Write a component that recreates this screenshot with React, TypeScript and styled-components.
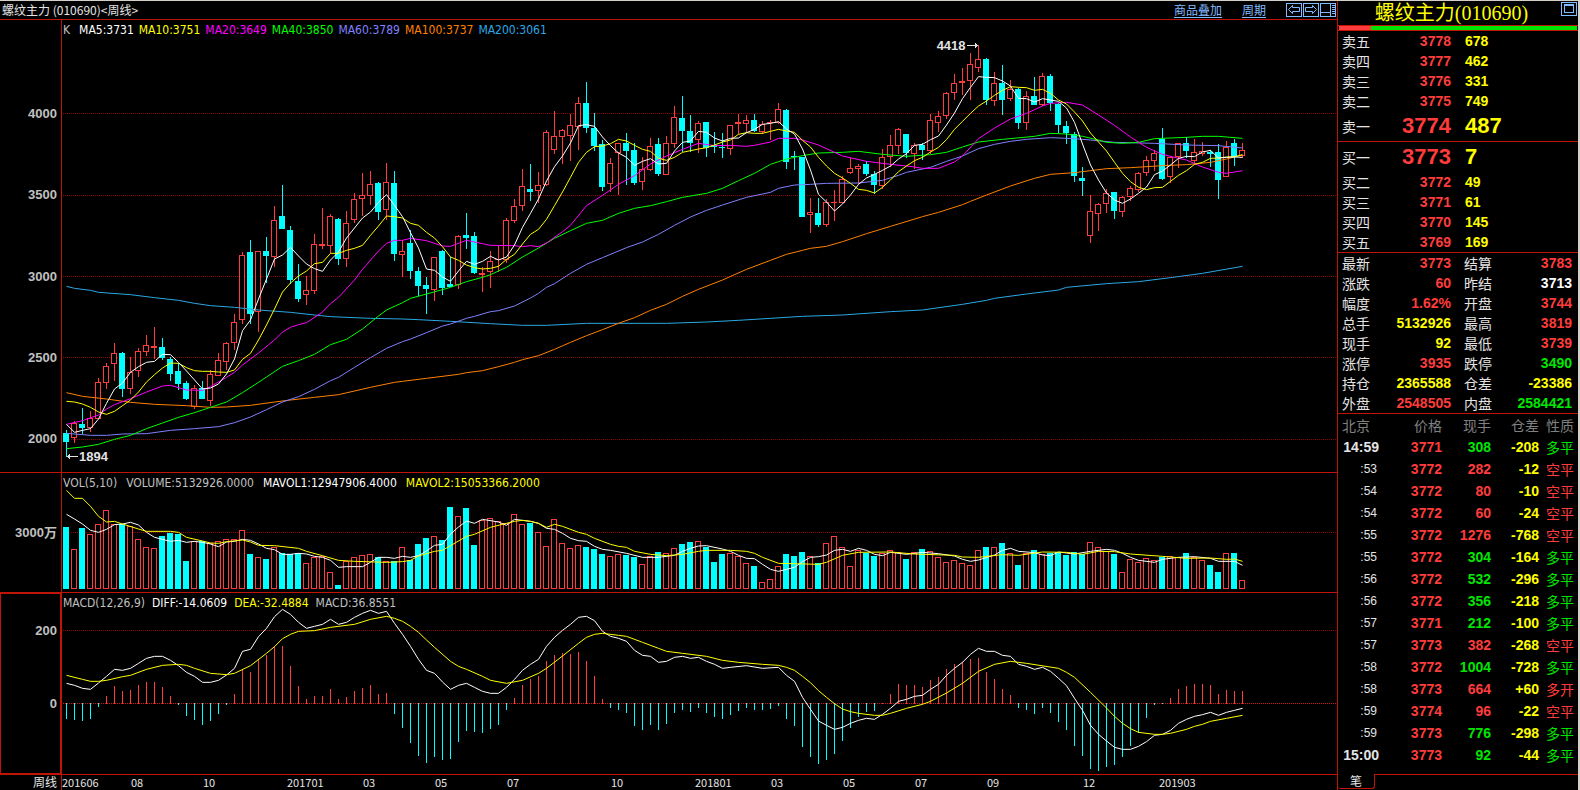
import React from "react";
import styled, { createGlobalStyle } from "styled-components";

const color = {
  bg: "#000000",
  line: "#c01408",
  grid: "#8c0000",
  up: "#ff3c3c",
  down: "#00ffff",
  green: "#00e600",
  yellow: "#ffff00",
  white: "#ffffff",
  label: "#e4e4e4",
  muted: "#c0c0c0",
  dim: "#808080",
  link: "#80bcff",
  frame: "#d4d0c8",
};

const cjk = '"Noto Sans CJK SC", sans-serif';
const legendFont = '"DejaVu Sans Condensed", "DejaVu Sans", sans-serif';
const numberFont = '"Liberation Sans", "Noto Sans CJK SC", sans-serif';

const GlobalStyle = createGlobalStyle`
  *, *::before, *::after { box-sizing: border-box; }
  body { margin: 0; background: ${color.bg}; }
`;

/* ---------- data: pixel values are stored in thirds of a pixel ---------- */

type Point = [number, number];
type Candle = [string, number, number, number, number];

// direction, high, body top, body bottom, low
const candles: Candle[] = `
c 1290 1299 1326 1370|r 1262 1269 1313 1328|c 1224 1272 1284 1302|r 1233 1254 1284 1296|r 1134 1146 1257 1257
r 1090 1099 1149 1166|r 1029 1059 1092 1143|c 1056 1059 1167 1190|r 1071 1116 1167 1182|r 1044 1053 1113 1131
r 1005 1035 1056 1068|r 981 1038 1044 1077|c 1014 1041 1074 1080|c 1071 1077 1122 1143|c 1090 1113 1152 1170
c 1143 1149 1197 1200|r 1155 1164 1221 1227|c 1143 1164 1197 1197|r 1110 1122 1203 1218|r 1059 1080 1128 1128
r 1026 1029 1086 1110|r 942 966 1029 1050|r 756 765 960 972|c 720 756 942 972|r 753 753 936 996
c 711 753 768 850|r 618 660 771 801|c 555 648 687 687|c 678 690 840 852|c 792 843 897 906
r 828 870 885 915|r 702 732 873 882|r 624 732 738 747|r 642 648 738 760|c 654 657 777 795
r 633 669 777 801|r 579 597 660 669|r 519 585 597 648|r 513 552 588 615|c 546 549 636 660
r 489 546 630 660|c 513 549 762 783|r 720 753 765 831|c 690 729 813 837|c 801 813 858 888
c 831 855 867 942|r 771 771 870 903|c 750 753 864 885|c 771 852 861 861|r 705 708 855 867
c 639 705 714 747|c 696 708 819 822|r 801 819 825 876|r 753 783 816 864|r 738 777 781 816
r 654 660 780 789|r 597 618 663 669|r 507 558 618 633|c 492 567 576 603|r 516 555 573 609
r 390 396 555 558|r 333 408 450 462|r 387 390 411 492|r 342 375 408 483|r 291 309 381 450
c 246 309 384 399|c 339 384 438 453|c 420 432 561 573|r 474 489 552 576|r 429 429 459 585
c 399 429 453 555|c 429 450 549 555|r 471 507 546 570|r 414 438 510 513|c 414 432 522 528
r 408 429 525 525|r 318 351 432 444|c 288 354 393 456|c 345 393 429 456|r 363 369 420 459
c 366 366 444 471|c 396 436 440 459|c 399 440 444 474|r 375 375 447 465|r 342 366 371 402
r 345 360 372 399|c 342 360 393 396|r 363 372 396 402|r 360 366 370 420|r 309 327 369 372
c 327 330 486 507|c 453 467 472 510|c 471 471 651 651|r 594 636 645 699|c 594 639 675 681
r 597 606 675 681|r 570 606 610 663|r 528 537 609 609|r 474 504 519 522|r 492 498 506 552
c 483 492 522 528|c 513 522 555 582|r 447 471 558 567|r 405 435 471 501|r 384 387 438 462
c 402 402 459 474|r 429 435 462 507|c 429 435 450 480|r 342 360 453 462|r 333 348 369 396
r 276 279 348 357|r 222 249 279 300|r 204 243 248 285|r 159 192 243 300|r 135 177 204 216
c 174 177 300 315|r 216 249 303 318|c 195 249 300 345|r 240 267 297 303|c 264 267 369 387
r 273 288 369 390|c 231 288 315 315|r 219 228 315 318|c 222 228 309 333|c 309 312 375 399
c 363 378 399 432|c 396 402 528 546|c 501 534 543 588|r 585 633 708 729|r 609 612 642 693
r 567 579 612 639|c 576 576 633 657|r 588 591 636 651|r 558 564 591 603|r 516 519 570 576
r 468 480 519 528|r 450 459 483 513|c 384 417 537 540|r 468 471 531 549|r 429 429 471 504
c 411 429 453 474|r 417 456 483 495|r 426 453 462 468|c 450 456 462 501|c 432 456 540 597
r 423 441 531 531|c 417 429 471 498|r 429 450 468 474`
  .trim()
  .split(/[|\n]/)
  .map((s) => {
    const [d, ...v] = s.trim().split(" ");
    return [d, ...v.map(Number)] as Candle;
  });

const nums = (s: string) => s.trim().split(/\s+/).map(Number);
const dense = (s: string): Point[] => nums(s).map((y, i) => [i, y]);
const sparse = (s: string): Point[] =>
  s.trim().split(/\s+/).map((p) => p.split(":").map(Number) as Point);

const ma5 = dense(`1273 1297 1291 1286 1257 1210 1167 1149 1117 1100 1087 1084 1063 1064 1087 1113 1140 1167 1164 1152
1122 1077 992 960 897 837 777 765 742 768 792 806 814 780 756 714 684 654 636 607 584 616 650 698 744 807 811 831 844 813
784 793 784 769 780 771 735 682 640 597 543 500 468 429 377 374 379 411 437 459 472 496 484 476 492 490 453 427 423 394
397 414 423 415 414 398 388 373 370 365 387 402 447 510 583 606 633 612 585 553 534 523 511 498 477 461 436 433 419 408
375 339 296 262 230 232 233 243 258 295 296 306 296 300 304 324 367 432 495 540 579 600 610 597 580 561 524 513 495 475
469 470 456 451 474 472 471 472`);

const ma10 = dense(`1204 1206 1212 1222 1236 1243 1234 1217 1200 1176 1146 1124 1104 1089 1090 1103 1112 1114 1114 1116
1117 1110 1078 1060 1020 975 927 876 849 828 813 791 787 760 760 751 745 736 706 678 648 650 654 670 676 697 714 740 771 781
795 803 807 805 799 778 763 732 703 688 658 617 576 532 487 457 440 438 431 418 423 436 448 454 475 481 472 457 452 447
443 435 426 420 403 398 400 400 394 388 393 397 421 441 472 498 520 534 550 568 571 579 562 540 515 498 482 472 456 442
419 388 364 340 318 303 286 271 260 262 263 271 268 280 300 312 336 363 399 426 453 487 520 545 562 569 563 562 544 526
512 493 487 475 474 471 470 464`);

const ma20 = sparse(`0:1273 2:1262 4:1245 5:1227 6:1214 8:1196 10:1176 12:1158 13:1156 15:1170 17:1171 18:1160 20:1132
21:1117 22:1095 24:1059 26:1020 27:996 28:982 29:974 30:968 32:936 33:911 34:892 36:840 37:808 39:753 40:730 41:721 42:721
43:715 45:722 47:738 48:739 50:721 52:731 53:736 56:737 57:740 58:737 59:740 60:729 62:695 63:676 65:617 67:586 69:553
71:527 73:492 75:468 77:448 79:430 81:437 83:436 85:439 86:436 88:426 89:415 91:415 92:420 94:435 97:468 100:484 103:493
105:498 106:501 107:505 109:505 111:486 112:468 114:416 116:384 118:357 120:340 122:318 123:310 125:307 127:315 129:345
131:376 133:411 135:442 137:463 139:475 140:480 142:501 144:517 145:520 147:512`);

const ma40 = sparse(`0:1346 2:1341 4:1333 6:1318 8:1306 10:1286 12:1269 14:1252 16:1238 18:1222 20:1206 22:1178 24:1147
25:1131 27:1099 29:1082 31:1063 33:1034 35:1018 37:987 39:948 40:930 42:908 43:895 45:882 47:869 48:862 50:845 52:832
53:824 55:802 57:771 59:744 61:715 63:692 65:670 67:661 69:640 71:625 73:617 75:605 77:592 80:580 82:565 84:542 86:520
88:493 90:477 92:467 94:459 97:457 99:454 102:463 105:469 108:464 110:457 112:441 114:426 117:418 121:409 123:400 125:402
127:409 129:420 130:427 132:430 134:427 136:416 140:412 142:409 144:409 147:415`);

const ma60 = sparse(`0:1300 3:1306 5:1306 7:1302 10:1301 13:1291 16:1286 19:1280 21:1268 23:1251 25:1229 27:1206 29:1190
31:1168 33:1142 34:1132 36:1102 38:1073 40:1045 42:1025 43:1017 45:998 47:978 48:972 50:955 51:949 53:935 54:932 56:918
58:894 59:880 60:862 61:851 63:820 65:793 67:773 70:743 72:726 74:703 76:676 78:651 80:631 82:615 85:592 88:577 89:565
91:555 93:553 95:550 99:549 102:541 104:526 105:517 108:502 110:484 112:468 114:446 116:433 118:424 120:418 123:413
126:416 128:420 131:427 136:430 140:435 144:437 147:444`);

const ma100 = sparse(`0:1178 2:1189 5:1197 8:1207 11:1213 15:1217 18:1222 20:1221 23:1216 26:1206 28:1200 31:1192 34:1184
38:1162 41:1147 42:1144 45:1135 49:1123 50:1118 52:1112 54:1100 56:1087 57:1079 59:1067 61:1048 63:1027 65:1007 67:989
69:970 71:953 73:931 75:913 77:889 79:868 82:840 85:808 88:781 90:763 92:751 93:745 95:739 97:725 100:701 103:679 107:650
109:637 112:614 113:604 115:585 118:558 121:535 123:523 126:518 130:506 133:503 137:497 140:494 143:487 145:477 147:465`);

const ma200 = sparse(`0:859 1:865 3:871 4:877 8:884 11:893 14:901 16:910 18:917 21:922 24:930 28:937 31:945 33:950 38:955
42:957 44:959 48:964 53:971 57:976 60:976 65:970 75:970 80:966 84:961 88:955 92:949 97:945 103:935 107:930 112:913 115:901
116:895 120:882 124:870 125:862 130:851 134:845 138:833 142:820 147:799`);

const volumes = nums(`171 238 174 192 162 121 162 162 168 207 231 234 198 189 192 273 213 213 219 213 207 207 180 252 261
267 231 249 252 249 279 261 258 306 345 273 261 255 252 261 273 273 231 270 222 204 198 210 111 138 114 225 150 144 153
159 132 162 159 186 228 147 219 234 225 231 237 252 258 252 255 261 282 258 246 249 234 222 216 213 231 276 252 249 258
279 288 336 327 288 252 258 246 258 279 219 198 231 288 240 249 258 249 240 246 267 246 237 243 261 276 270 279 285 240
231 231 219 249 285 249 240 252 249 246 255 246 252 216 231 243 252 306 267 276 264 270 261 258 261 249 261 270 285 306
249 249 330`);

const mavol1 = sparse(`0:133 1:147 2:162 3:181 4:187 5:178 6:164 7:162 8:157 9:165 10:187 11:202 12:208 13:214 14:211
15:217 16:214 17:217 18:222 19:230 20:216 21:214 22:208 23:211 24:222 25:235 26:239 27:253 28:253 29:250 30:252 31:259
32:262 33:271 34:292 35:290 37:290 38:277 39:262 40:262 41:265 42:259 43:262 44:257 45:243 46:226 47:223 48:192 49:171
50:153 51:160 52:148 54:156 55:166 56:148 58:154 59:160 60:175 61:178 62:190 63:205 64:212 65:214 66:229 67:238 68:241
70:250 72:262 74:262 76:256 77:244 78:235 79:228 80:227 82:237 83:244 84:256 85:265 86:266 87:283 88:298 89:304 90:298
91:292 92:275 93:262 94:260 95:255 96:241 97:238 98:244 99:235 100:241 101:253 102:257 103:247 105:253 107:247 109:251
111:258 112:268 113:274 114:270 116:255 117:241 118:235 119:244 121:248 122:255 123:257 124:246 126:252 128:244 130:238
131:241 132:250 133:262 134:271 136:277 137:268 139:262 141:260 143:265 144:274 146:274 147:286`);

const mavol2 = sparse(`0:61 1:85 2:85 3:109 4:139 5:156 6:154 7:162 9:177 10:184 13:184 14:187 15:202 17:213 18:219 19:220
20:215 22:210 23:216 24:226 26:227 29:235 30:244 32:257 34:271 36:274 40:277 42:275 43:271 44:258 46:244 47:241 48:227
50:199 51:193 53:172 55:160 56:154 57:151 58:154 59:160 60:172 61:163 62:169 64:187 65:193 66:205 68:223 69:229 70:232
71:244 73:253 75:257 77:253 79:244 80:241 83:241 85:244 86:250 87:262 89:280 94:283 95:277 97:256 99:247 103:246 106:252
111:256 112:261 114:262 117:254 119:256 122:246 125:247 127:253 129:244 131:245 133:252 137:259 140:265 143:264 145:268
146:267 147:274`);

const macdBars = nums(`747 750 753 747 711 678 648 663 660 645 636 636 651 678 705 738 750 765 753 732 705 672 597 606 570
555 528 528 588 648 687 678 678 657 687 681 663 654 645 672 669 732 774 819 858 879 861 870 867 816 783 786 789 777 765
720 684 645 627 618 573 555 549 552 546 573 618 687 714 720 729 768 780 765 780 762 729 720 726 714 729 741 747 735 723
714 720 720 717 708 747 768 831 861 882 870 852 813 774 741 726 723 699 672 642 645 645 651 630 621 597 582 576 567 564
606 627 657 675 714 720 732 714 729 756 780 828 858 897 903 891 885 861 828 788 744 705 703 684 657 648 642 642 645 672
660 663 663`);

const diff = sparse(`0:640 1:646 2:655 3:658 4:639 5:619 6:598 7:601 8:595 9:580 10:565 11:559 12:559 13:571 14:587 15:607
16:619 17:637 18:637 19:631 20:615 21:595 22:544 23:538 24:500 25:475 26:440 27:418 28:433 29:457 30:475 31:469 32:463
33:448 34:463 35:457 36:442 37:430 38:421 39:430 40:424 41:460 42:493 43:529 44:568 45:601 46:610 47:636 48:658 49:646
50:640 51:652 52:664 53:670 54:670 55:652 56:628 57:601 58:583 59:568 60:529 61:502 62:481 63:463 64:442 65:439 66:452
67:484 68:499 69:505 70:514 71:541 72:556 73:559 74:577 75:574 76:562 77:559 78:565 79:562 80:574 81:583 82:595 83:592
85:587 87:595 89:592 90:616 91:634 92:682 93:718 94:753 95:766 96:778 97:772 98:760 99:751 100:745 101:748 102:733 103:715
104:694 105:688 106:679 107:676 108:658 109:643 110:616 111:595 112:577 113:553 114:535 115:544 116:544 117:556 118:559
119:583 120:589 121:598 122:592 123:604 124:625 125:647 126:685 127:721 128:766 129:793 130:813 131:832 132:838 133:838
134:829 135:815 136:796 137:793 138:781 139:760 140:748 141:739 142:734 143:727 144:736 145:727 146:721 147:715`);

const dea = sparse(`0:616 2:628 3:634 4:634 5:631 7:620 8:616 10:598 12:586 14:583 15:586 16:595 18:610 20:614 21:610 23:587
25:550 26:530 27:506 28:493 29:484 31:482 33:472 36:463 38:448 40:439 41:445 42:454 43:469 44:487 45:510 46:532 48:574
49:589 50:598 52:619 53:631 55:640 57:631 59:610 60:595 62:558 64:520 65:502 66:493 67:490 69:496 70:499 72:517 74:535
75:544 77:550 80:559 82:571 84:577 87:583 89:586 90:592 91:601 92:619 93:638 94:662 95:682 96:701 97:717 98:725 99:730
101:736 102:736 103:730 105:715 107:703 108:694 110:669 112:640 114:604 116:583 118:574 120:580 124:595 125:607 126:622
128:667 130:714 131:739 132:760 133:776 134:787 136:793 137:793 138:790 140:778 141:769 142:763 143:754 145:745 147:736`);

type Tone = "up" | "green" | "yellow" | "white";
type Quote = [string, string, string];

const asks: Quote[] = [
  ["卖五", "3778", "678"],
  ["卖四", "3777", "462"],
  ["卖三", "3776", "331"],
  ["卖二", "3775", "749"],
  ["卖一", "3774", "487"],
];
const bids: Quote[] = [
  ["买一", "3773", "7"],
  ["买二", "3772", "49"],
  ["买三", "3771", "61"],
  ["买四", "3770", "145"],
  ["买五", "3769", "169"],
];

const stats: [string, string, Tone, string, string, Tone][] = [
  ["最新", "3773", "up", "结算", "3783", "up"],
  ["涨跌", "60", "up", "昨结", "3713", "white"],
  ["幅度", "1.62%", "up", "开盘", "3744", "up"],
  ["总手", "5132926", "yellow", "最高", "3819", "up"],
  ["现手", "92", "yellow", "最低", "3739", "up"],
  ["涨停", "3935", "up", "跌停", "3490", "green"],
  ["持仓", "2365588", "yellow", "仓差", "-23386", "yellow"],
  ["外盘", "2548505", "up", "内盘", "2584421", "green"],
];

const ticks: [string, string, string, Tone, string, string, Tone][] = [
  ["14:59", "3771", "308", "green", "-208", "多平", "green"],
  [":53", "3772", "282", "up", "-12", "空平", "up"],
  [":54", "3772", "80", "up", "-10", "空平", "up"],
  [":54", "3772", "60", "up", "-24", "空平", "up"],
  [":55", "3772", "1276", "up", "-768", "空平", "up"],
  [":55", "3772", "304", "green", "-164", "多平", "green"],
  [":56", "3772", "532", "green", "-296", "多平", "green"],
  [":56", "3772", "356", "green", "-218", "多平", "green"],
  [":57", "3771", "212", "green", "-100", "多平", "green"],
  [":57", "3773", "382", "up", "-268", "空平", "up"],
  [":58", "3772", "1004", "green", "-728", "多平", "green"],
  [":58", "3773", "664", "up", "+60", "多开", "up"],
  [":59", "3774", "96", "up", "-22", "空平", "up"],
  [":59", "3773", "776", "green", "-298", "多平", "green"],
  ["15:00", "3773", "92", "green", "-44", "多平", "green"],
];

const dates: [string, number][] = [
  ["201606", 69], ["08", 72], ["10", 84], ["201701", 76], ["03", 72], ["05", 72], ["07", 104], ["10", 84],
  ["201801", 76], ["03", 72], ["05", 72], ["07", 72], ["09", 96], ["12", 76], ["201903", 178],
];

/* ---------- layout ---------- */

const Page = styled.div`
  display: grid;
  grid-template-columns: minmax(0, 1fr) 241px;
  min-height: 100vh;
  background: ${color.bg};
  border-top: 1px solid ${color.frame};
  border-right: 2px solid ${color.frame};
  font-family: ${cjk};
  color: ${color.label};
  overflow: hidden;
`;

const Charts = styled.main`
  display: flex;
  flex-direction: column;
  min-width: 0;
`;

const TitleBar = styled.header`
  display: flex;
  align-items: center;
  height: 18px;
  padding: 0 1px 0 2px;
  font-size: 12px;
  line-height: 18px;
`;

const ChartTitle = styled.h1`
  margin: 0 auto 0 0;
  font-size: 12px;
  font-weight: 400;
  white-space: pre;
`;

const TopLink = styled.a`
  margin-right: 20px;
  color: ${color.link};
  text-underline-offset: 2px;
`;

const Tools = styled.div`
  display: flex;
  gap: 1px;
`;

const IconButton = styled.button`
  display: block;
  width: 16px;
  height: 14px;
  padding: 0;
  border: 1px solid ${color.link};
  background: transparent;
  color: ${color.link};
  svg { display: block; }
`;

const Panel = styled.section<{ $grow: number }>`
  display: grid;
  grid-template-columns: 62px minmax(0, 1fr);
  flex: ${(p) => p.$grow} 0 ${(p) => p.$grow}px;
  border-top: 1px solid ${color.line};
`;

const Axis = styled.div<{ $top?: number; $bottom?: number; $center?: boolean; $selected?: boolean }>`
  display: flex;
  flex-direction: column;
  justify-content: ${(p) => (p.$center ? "center" : "space-between")};
  padding: ${(p) => p.$top ?? 0}px 4px ${(p) => p.$bottom ?? 0}px 0;
  border-right: 1px solid ${color.line};
  box-shadow: ${(p) => (p.$selected ? `inset 0 0 0 1px ${color.line}` : "none")};
  font: bold 13px/16px ${numberFont};
  color: ${color.muted};
  text-align: right;
`;

const Plot = styled.div`
  position: relative;
  min-width: 0;
`;

const Canvas = styled.svg`
  position: absolute;
  inset: 0;
  width: 100%;
  height: 100%;
`;

const Legend = styled.div<{ $gap: number }>`
  position: relative;
  display: flex;
  gap: ${(p) => p.$gap}px;
  padding: 2px 1px;
  font: 12px/16px ${legendFont};
  white-space: nowrap;
`;

const LegendItem = styled.span<{ $color: string; $wide?: boolean }>`
  color: ${(p) => p.$color};
  margin-right: ${(p) => (p.$wide ? 4 : 0)}px;
`;

const Marker = styled.span<{ $left: string; $top: string }>`
  position: absolute;
  left: ${(p) => p.$left};
  top: ${(p) => p.$top};
  display: flex;
  align-items: center;
  gap: 1px;
  font: bold 13px/16px ${numberFont};
  color: ${color.label};
`;

const Timeline = styled.footer`
  display: grid;
  grid-template-columns: 62px minmax(0, 1fr);
  height: 16px;
  border-top: 1px solid ${color.line};
  font-size: 12px;
  line-height: 14px;
`;

const Period = styled.div`
  padding-right: 4px;
  border-right: 1px solid ${color.line};
  text-align: right;
`;

const Dates = styled.div`
  display: flex;
  font-size: 11px;
`;

const DateMark = styled.span<{ $span: number }>`
  flex: ${(p) => p.$span} 1 0;
  min-width: 0;
`;

const Sidebar = styled.aside`
  display: flex;
  flex-direction: column;
  border-left: 1px solid ${color.line};
`;

const SideHeader = styled.header`
  display: flex;
  align-items: flex-start;
  height: 24px;
  padding: 1px 1px 0 4px;
`;

const Instrument = styled.h2`
  flex: 1;
  margin: 0;
  font: 400 20px/22px "Liberation Serif", ${cjk};
  color: ${color.yellow};
  text-align: center;
  white-space: nowrap;
`;

const Balance = styled.div`
  display: grid;
  grid-template-columns: 32fr 206fr;
  height: 6px;
  padding: 0 1px;
  border: solid ${color.line};
  border-width: 1px 0;
`;

const Share = styled.div<{ $color: string }>`
  background: ${(p) => p.$color};
`;

const Table = styled.table`
  width: 100%;
  table-layout: fixed;
  border-collapse: separate;
  border-spacing: 0;
  font: bold 14px/20px ${numberFont};
  td, th { padding: 0; white-space: nowrap; }
`;

const Rule = styled.div`
  height: 1px;
  background: ${color.line};
`;

const Row = styled.tr<{ $h: number }>`
  height: ${(p) => p.$h}px;
  line-height: ${(p) => p.$h}px;
`;

const Name = styled.th<{ $second?: boolean }>`
  &&& { padding-left: ${(p) => (p.$second ? 13 : 4)}px; }
  font: 400 14px/20px ${cjk};
  color: ${color.label};
  text-align: left;
`;

const Value = styled.td<{ $tone: Tone; $big?: boolean; $left?: boolean; $edge?: boolean }>`
  &&& { padding: 0 ${(p) => (p.$edge ? 6 : 0)}px 0 ${(p) => (p.$left ? 14 : 0)}px; }
  font-size: ${(p) => (p.$big ? 22 : 14)}px;
  color: ${(p) => color[p.$tone]};
  text-align: ${(p) => (p.$left ? "left" : "right")};
`;

const Head = styled.th<{ $left?: boolean }>`
  &&& { padding-left: ${(p) => (p.$left ? 4 : 0)}px; }
  font: 400 14px/22px ${cjk};
  color: ${color.dim};
  text-align: ${(p) => (p.$left ? "left" : "right")};
`;

const Time = styled.td<{ $full: boolean }>`
  &&& { padding-right: ${(p) => (p.$full ? 0 : 2)}px; }
  font-size: ${(p) => (p.$full ? 14 : 12)}px;
  font-weight: ${(p) => (p.$full ? 700 : 400)};
  color: ${color.label};
  text-align: right;
`;

const Nature = styled.td<{ $tone: Tone }>`
  font: 400 14px/22px ${cjk};
  color: ${(p) => color[p.$tone]};
  text-align: right;
`;

const Tabs = styled.nav`
  display: flex;
  height: 16px;
  margin-top: auto;
`;

const Tab = styled.button`
  width: 37px;
  height: 15px;
  padding: 0;
  border: solid ${color.line};
  border-width: 0 1px 1px 0;
  border-radius: 0 0 3px 3px;
  background: transparent;
  color: ${color.label};
  font: 12px/14px ${cjk};
`;

const TabRest = styled.div`
  flex: 1;
  border-top: 1px solid ${color.line};
`;

/* ---------- chart drawing ---------- */

const columnX = (i: number) => 66 + i * 8;
const px = (v: number) => Math.round(v / 3);
const LOWER = 1410;

const GridLine = ({ y, tone = color.grid }: { y: number; tone?: string }) => (
  <line x1={63} x2={1337} y1={y + 0.5} y2={y + 0.5} stroke={tone} strokeDasharray="1 1" shapeRendering="crispEdges" />
);

const Curve = ({ points, stroke, offset = 0 }: { points: Point[]; stroke: string; offset?: number }) => (
  <polyline
    fill="none"
    stroke={stroke}
    strokeWidth={1}
    points={points.map(([i, y]) => `${columnX(i) + 0.5},${((y + offset) / 3).toFixed(2)}`).join(" ")}
  />
);

const Bar = ({ i, top, bottom, up }: { i: number; top: number; bottom: number; up: boolean }) => {
  const x = columnX(i) - 3;
  const h = Math.max(1, bottom - top);
  if (!up || h < 3) return <rect x={x} y={top} width={6} height={h} fill={up ? color.up : color.down} />;
  return <rect x={x + 0.5} y={top + 0.5} width={5} height={h - 1} fill={color.bg} stroke={color.up} />;
};

const PriceChart = () => (
  <Canvas viewBox="62 20 1275 452" preserveAspectRatio="none" aria-label="K">
    {[113, 195, 276, 357, 439].map((y) => <GridLine key={y} y={y} />)}
    <g shapeRendering="crispEdges">
      {candles.map(([d, hi, top, bottom, lo], i) => (
        <g key={i}>
          <rect x={columnX(i)} y={px(hi)} width={1} height={px(lo) - px(hi)} fill={d === "r" ? color.up : color.down} />
          <Bar i={i} top={px(top)} bottom={px(bottom)} up={d === "r"} />
        </g>
      ))}
    </g>
    <Curve points={ma200} stroke="#2ca8e4" />
    <Curve points={ma100} stroke="#ff8000" />
    <Curve points={ma60} stroke="#8080ff" />
    <Curve points={ma40} stroke="#00ff00" />
    <Curve points={ma20} stroke="#ff00ff" />
    <Curve points={ma10} stroke="#ffff00" />
    <Curve points={ma5} stroke="#ffffff" />
  </Canvas>
);

const VolumeChart = () => (
  <Canvas viewBox="62 473 1275 119" preserveAspectRatio="none" aria-label="VOL">
    <GridLine y={532} />
    <g shapeRendering="crispEdges">
      {volumes.map((v, i) => <Bar key={i} i={i} top={px(v + LOWER)} bottom={589} up={candles[i][0] === "r"} />)}
    </g>
    <Curve points={mavol1} stroke="#ffffff" offset={LOWER} />
    <Curve points={mavol2} stroke="#ffff00" offset={LOWER} />
  </Canvas>
);

const MacdChart = () => (
  <Canvas viewBox="62 593 1275 181" preserveAspectRatio="none" aria-label="MACD">
    <GridLine y={630} />
    <GridLine y={703} tone="#d01818" />
    <g shapeRendering="crispEdges">
      {macdBars.map((v, i) => {
        const end = px(v + LOWER);
        const up = v < 701;
        return (
          <rect
            key={i}
            x={columnX(i)}
            y={up ? end : 703}
            width={1}
            height={Math.max(1, up ? 704 - end : end - 703)}
            fill={up ? color.up : color.down}
          />
        );
      })}
    </g>
    <Curve points={diff} stroke="#ffffff" offset={LOWER} />
    <Curve points={dea} stroke="#ffff00" offset={LOWER} />
  </Canvas>
);

const Arrow = ({ left }: { left?: boolean }) => (
  <svg width="11" height="7" viewBox="0 0 11 7" shapeRendering="crispEdges" fill={color.label}>
    <path d={left ? "M0 3h11v1H0zM1 2h2v3H1zM2 1h1v5H2z" : "M0 3h11v1H0zM8 2h2v3H8zM8 1h1v5H8z"} />
  </svg>
);

const HollowArrow = ({ right }: { right?: boolean }) => (
  <svg width="14" height="12" viewBox="0 0 14 12" fill="none" stroke="currentColor">
    <path
      d={right ? "M12.5 5.5L8.5 1.5V3.5H1.5V7.5H8.5V9.5Z" : "M1.5 5.5L5.5 1.5V3.5H12.5V7.5H5.5V9.5Z"}
    />
  </svg>
);

const LayoutIcon = () => (
  <svg width="14" height="12" viewBox="0 0 14 12" stroke="currentColor" shapeRendering="crispEdges">
    <path d="M0 8.5H10M9.5 0V12M11 1.5H14M11 3.5H14M11 5.5H14M11 7.5H14M11 9.5H14" />
  </svg>
);

const WindowIcon = () => (
  <svg width="14" height="12" viewBox="0 0 14 12" fill="none" stroke="currentColor" shapeRendering="crispEdges">
    <path d="M2.5 1.5H11.5V9.5H2.5ZM2.5 2.5H11.5" />
  </svg>
);

/* ---------- sidebar tables ---------- */

const Col = styled.col<{ $w?: number }>`
  width: ${(p) => (p.$w ? `${p.$w}px` : "auto")};
`;

const QuoteCols = () => (
  <colgroup>
    <Col $w={40} />
    <Col $w={73} />
    <Col $w={50} />
    <Col />
  </colgroup>
);

const QuoteTable = ({ rows, best }: { rows: Quote[]; best: string }) => (
  <Table>
    <QuoteCols />
    <tbody>
      {rows.map(([name, price, size]) => (
        <Row key={name} $h={name === best ? 30 : 20}>
          <Name scope="row">{name}</Name>
          <Value $tone="up" $big={name === best}>{price}</Value>
          <Value $tone="yellow" $big={name === best} $left colSpan={2}>{size}</Value>
        </Row>
      ))}
    </tbody>
  </Table>
);

const StatsTable = () => (
  <Table>
    <QuoteCols />
    <tbody>
      {stats.map(([a, av, at, b, bv, bt]) => (
        <Row key={a} $h={20}>
          <Name scope="row">{a}</Name>
          <Value $tone={at}>{av}</Value>
          <Name scope="row" $second>{b}</Name>
          <Value $tone={bt} $edge>{bv}</Value>
        </Row>
      ))}
    </tbody>
  </Table>
);

const TickTable = () => (
  <Table>
    <colgroup>
      {[41, 63, 49, 48, 35].map((w, i) => <Col key={i} $w={w} />)}
      <Col />
    </colgroup>
    <thead>
      <Row $h={22}>
        <Head $left>北京</Head>
        <Head>价格</Head>
        <Head>现手</Head>
        <Head>仓差</Head>
        <Head>性质</Head>
      </Row>
    </thead>
    <tbody>
      {ticks.map(([time, price, size, st, change, nature, nt], i) => (
        <Row key={i} $h={22}>
          <Time $full={time.length > 3}>{time}</Time>
          <Value $tone="up">{price}</Value>
          <Value $tone={st}>{size}</Value>
          <Value $tone="yellow">{change}</Value>
          <Nature $tone={nt}>{nature}</Nature>
        </Row>
      ))}
    </tbody>
  </Table>
);

export default function App() {
  return (
    <>
      <GlobalStyle />
      <Page>
        <Charts>
          <TitleBar>
            <ChartTitle>{"螺纹主力 (010690)<周线>"}</ChartTitle>
            <TopLink href="#overlay">商品叠加</TopLink>
            <TopLink href="#period">周期</TopLink>
            <Tools>
              <IconButton type="button" aria-label="前一个"><HollowArrow /></IconButton>
              <IconButton type="button" aria-label="后一个"><HollowArrow right /></IconButton>
              <IconButton type="button" aria-label="布局"><LayoutIcon /></IconButton>
            </Tools>
          </TitleBar>

          <Panel $grow={453}>
            <Axis $top={86} $bottom={25}>
              <span>4000</span>
              <span>3500</span>
              <span>3000</span>
              <span>2500</span>
              <span>2000</span>
            </Axis>
            <Plot>
              <PriceChart />
              <Legend $gap={5}>
                <LegendItem $color={color.muted} $wide>K</LegendItem>
                <LegendItem $color="#ffffff">MA5:3731</LegendItem>
                <LegendItem $color="#ffff00">MA10:3751</LegendItem>
                <LegendItem $color="#ff00ff">MA20:3649</LegendItem>
                <LegendItem $color="#00ff00">MA40:3850</LegendItem>
                <LegendItem $color="#8080ff">MA60:3789</LegendItem>
                <LegendItem $color="#ff8000">MA100:3737</LegendItem>
                <LegendItem $color="#2ca8e4">MA200:3061</LegendItem>
              </Legend>
              <Marker $left="68.6%" $top="3.9%">4418<Arrow /></Marker>
              <Marker $left="0.4%" $top="94.9%"><Arrow left />1894</Marker>
            </Plot>
          </Panel>

          <Panel $grow={120}>
            <Axis $center><span>3000万</span></Axis>
            <Plot>
              <VolumeChart />
              <Legend $gap={9}>
                <LegendItem $color={color.muted}>VOL(5,10)</LegendItem>
                <LegendItem $color={color.muted}>VOLUME:5132926.0000</LegendItem>
                <LegendItem $color="#ffffff">MAVOL1:12947906.4000</LegendItem>
                <LegendItem $color="#ffff00">MAVOL2:15053366.2000</LegendItem>
              </Legend>
            </Plot>
          </Panel>

          <Panel $grow={182}>
            <Axis $top={30} $bottom={62} $selected>
              <span>200</span>
              <span>0</span>
            </Axis>
            <Plot>
              <MacdChart />
              <Legend $gap={7}>
                <LegendItem $color={color.muted}>MACD(12,26,9)</LegendItem>
                <LegendItem $color="#ffffff">DIFF:-14.0609</LegendItem>
                <LegendItem $color="#ffff00">DEA:-32.4884</LegendItem>
                <LegendItem $color={color.muted}>MACD:36.8551</LegendItem>
              </Legend>
            </Plot>
          </Panel>

          <Timeline>
            <Period>周线</Period>
            <Dates>
              {dates.map(([text, span], i) => <DateMark key={i} $span={span}>{text}</DateMark>)}
            </Dates>
          </Timeline>
        </Charts>

        <Sidebar>
          <SideHeader>
            <Instrument>螺纹主力(010690)</Instrument>
            <IconButton type="button" aria-label="窗口"><WindowIcon /></IconButton>
          </SideHeader>
          <Balance>
            <Share $color={color.up} />
            <Share $color={color.green} />
          </Balance>
          <QuoteTable rows={asks} best="卖一" />
          <Rule />
          <QuoteTable rows={bids} best="买一" />
          <Rule />
          <StatsTable />
          <Rule />
          <TickTable />
          <Tabs>
            <Tab type="button">笔</Tab>
            <TabRest />
          </Tabs>
        </Sidebar>
      </Page>
    </>
  );
}
